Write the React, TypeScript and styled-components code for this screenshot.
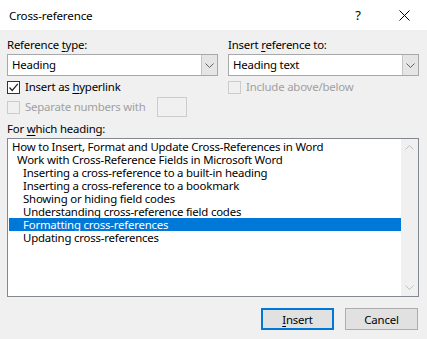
import React from "react";
import styled, { createGlobalStyle } from "styled-components";

const Global = createGlobalStyle`
  html, body { margin: 0; padding: 0; background: #f0f0f0; }
  body { font-family: "Segoe UI", "Noto Sans", "Liberation Sans", sans-serif; font-size: 11.4px; color: #000; }
  * { box-sizing: border-box; }
`;

const Dialog = styled.div`
  width: 427px;
  height: 339px;
  display: flex;
  flex-direction: column;
  background: #f0f0f0;
  overflow: hidden;
`;

const TitleBar = styled.div`
  height: 30px;
  background: #fff;
  display: flex;
  align-items: center;
  padding-left: 9px;
`;

const Title = styled.div`
  flex: 1;
  font-size: 11.6px;
  letter-spacing: -0.15px;
`;

const TitleButton = styled.div`
  width: 46px;
  height: 30px;
  display: flex;
  align-items: center;
  justify-content: center;
  font-size: 13px;
`;

const Body = styled.div`
  flex: 1;
  display: flex;
  flex-direction: column;
  padding: 0 8px 0 7px;
`;

const Columns = styled.div`
  display: grid;
  grid-template-columns: 211px 191px;
  column-gap: 10px;
  margin-top: 7px;
`;

const Column = styled.div`
  display: flex;
  flex-direction: column;
`;

const Label = styled.div<{ $disabled?: boolean }>`
  height: 16px;
  line-height: 16px;
  letter-spacing: -0.2px;
  color: ${(p) => (p.$disabled ? "#a0a0a0" : "#000")};
  white-space: nowrap;
`;

const U = styled.span`
  text-decoration: underline;
  text-underline-offset: 2px;
`;

const Select = styled.div`
  margin-top: 1px;
  height: 22px;
  display: flex;
  border: 1px solid #a8a8a8;
  background: #fff;
`;

const SelectValue = styled.div`
  flex: 1;
  padding-left: 4px;
  line-height: 20px;
  letter-spacing: -0.2px;
`;

const SelectArrow = styled.div`
  width: 16px;
  background: #e5e5e5;
  border-left: 1px solid #c4c4c4;
  display: flex;
  align-items: center;
  justify-content: center;
`;

const CheckRow = styled.div<{ $first?: boolean }>`
  height: 20px;
  margin-top: ${(p) => (p.$first ? "1px" : "0")};
  display: flex;
  align-items: center;
  gap: 5px;
`;

const Box = styled.div<{ $disabled?: boolean }>`
  width: 13px;
  height: 13px;
  border: 1px solid ${(p) => (p.$disabled ? "#cccccc" : "#333")};
  background: ${(p) => (p.$disabled ? "#f0f0f0" : "#fff")};
  display: flex;
  align-items: center;
  justify-content: center;
  flex: none;
`;

const SmallInput = styled.div`
  width: 30px;
  height: 20px;
  margin-left: 6px;
  border: 1px solid #cccccc;
  background: #f0f0f0;
`;

const HeadingLabel = styled(Label)`
  margin-top: 4px;
`;

const ListBox = styled.div`
  margin-top: 1px;
  height: 159px;
  border: 1px solid #828790;
  background: #fff;
  display: flex;
  padding: 1px 0 0 1px;
`;

const Items = styled.div`
  flex: 1;
  display: flex;
  flex-direction: column;
`;

const Item = styled.div<{ $level: number; $selected?: boolean }>`
  height: 13px;
  line-height: 13px;
  padding-left: ${(p) => [3, 8, 14][p.$level]}px;
  letter-spacing: -0.2px;
  white-space: nowrap;
  background: ${(p) => (p.$selected ? "#0078d7" : "transparent")};
  color: ${(p) => (p.$selected ? "#fff" : "#000")};
`;

const ScrollBar = styled.div`
  width: 17px;
  margin-top: -1px;
  background: #f0f0f0;
  display: flex;
  flex-direction: column;
  justify-content: space-between;
`;

const ScrollArrow = styled.div`
  height: 17px;
  display: flex;
  align-items: center;
  justify-content: center;
`;

const Buttons = styled.div`
  margin-top: 11px;
  display: flex;
  justify-content: flex-end;
  gap: 11px;
  padding-right: 1px;
`;

const Button = styled.div<{ $default?: boolean }>`
  width: 73px;
  height: 22px;
  display: flex;
  align-items: center;
  justify-content: center;
  background: #e1e1e1;
  border: ${(p) => (p.$default ? "2px solid #0078d7" : "1px solid #adadad")};
  letter-spacing: -0.2px;
`;

const Chevron = ({ up, color = "#606060" }: { up?: boolean; color?: string }) => (
  <svg width="9" height="5" viewBox="0 0 9 5">
    <path
      d={up ? "M0.5 4.5 L4.5 0.5 L8.5 4.5" : "M0.5 0.5 L4.5 4.5 L8.5 0.5"}
      fill="none"
      stroke={color}
      strokeWidth="1"
    />
  </svg>
);

const items: { text: string; level: number; selected?: boolean }[] = [
  { text: "How to Insert, Format and Update Cross-References in Word", level: 0 },
  { text: "Work with Cross-Reference Fields in Microsoft Word", level: 1 },
  { text: "Inserting a cross-reference to a built-in heading", level: 2 },
  { text: "Inserting a cross-reference to a bookmark", level: 2 },
  { text: "Showing or hiding field codes", level: 2 },
  { text: "Understanding cross-reference field codes", level: 2 },
  { text: "Formatting cross-references", level: 2, selected: true },
  { text: "Updating cross-references", level: 2 },
];

export default function App() {
  return (
    <>
      <Global />
      <Dialog>
        <TitleBar>
          <Title>Cross-reference</Title>
          <TitleButton>?</TitleButton>
          <TitleButton>
            <svg width="11" height="11" viewBox="0 0 11 11">
              <path d="M0.5 0.5 L10.5 10.5 M10.5 0.5 L0.5 10.5" stroke="#000" strokeWidth="1" />
            </svg>
          </TitleButton>
        </TitleBar>
        <Body>
          <Columns>
            <Column>
              <Label>
                Reference <U>t</U>ype:
              </Label>
              <Select>
                <SelectValue>Heading</SelectValue>
                <SelectArrow>
                  <Chevron />
                </SelectArrow>
              </Select>
              <CheckRow $first>
                <Box>
                  <svg width="11" height="11" viewBox="0 0 11 11">
                    <path d="M1.5 5.5 L4.2 8.5 L9.8 1.8" fill="none" stroke="#222" strokeWidth="1.2" />
                  </svg>
                </Box>
                <Label>
                  Insert as <U>h</U>yperlink
                </Label>
              </CheckRow>
              <CheckRow>
                <Box $disabled />
                <Label $disabled>Separate numbers with</Label>
                <SmallInput />
              </CheckRow>
            </Column>
            <Column>
              <Label>
                Insert <U>r</U>eference to:
              </Label>
              <Select>
                <SelectValue>Heading text</SelectValue>
                <SelectArrow>
                  <Chevron />
                </SelectArrow>
              </Select>
              <CheckRow $first>
                <Box $disabled />
                <Label $disabled>Include above/below</Label>
              </CheckRow>
            </Column>
          </Columns>
          <HeadingLabel>
            For <U>w</U>hich heading:
          </HeadingLabel>
          <ListBox>
            <Items>
              {items.map((it) => (
                <Item key={it.text} $level={it.level} $selected={it.selected}>
                  {it.text}
                </Item>
              ))}
            </Items>
            <ScrollBar>
              <ScrollArrow>
                <Chevron up color="#c0c0c0" />
              </ScrollArrow>
              <ScrollArrow>
                <Chevron color="#c0c0c0" />
              </ScrollArrow>
            </ScrollBar>
          </ListBox>
          <Buttons>
            <Button $default>
              <span>
                <U>I</U>nsert
              </span>
            </Button>
            <Button>Cancel</Button>
          </Buttons>
        </Body>
      </Dialog>
    </>
  );
}
